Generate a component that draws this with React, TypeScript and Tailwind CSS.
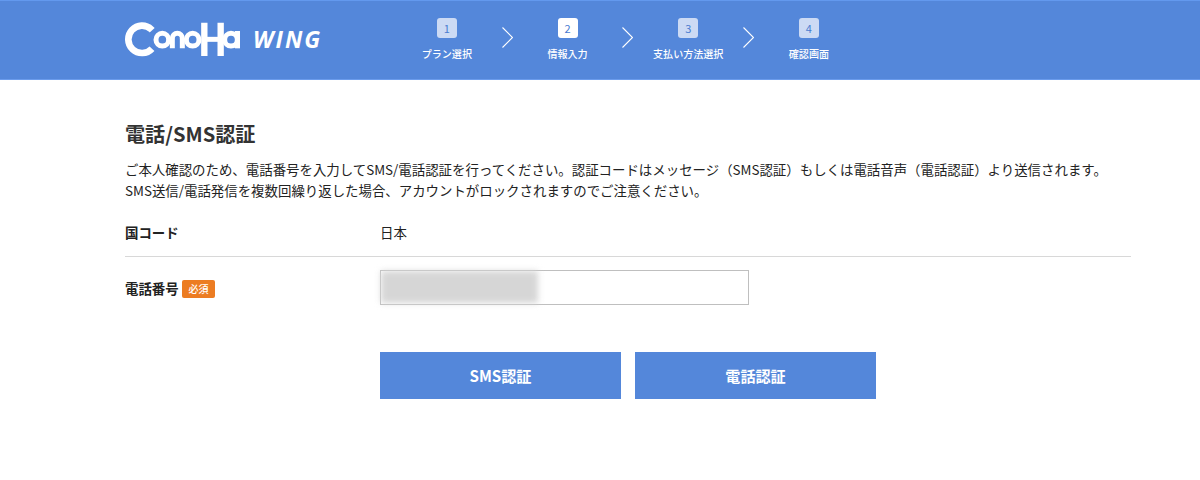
import { Fragment } from "react";
import clsx from "clsx";

const steps = ["プラン選択", "情報入力", "支払い方法選択", "確認画面"];
const currentStep = 2;

const Logo = () => (
  <div className="flex w-[267px] items-start">
    <svg
      role="img"
      aria-label="ConoHa"
      className="mt-[22px] h-[34.5px] w-[115.5px] shrink-0"
      viewBox="44 36 346.5 103.5"
      fill="none"
      stroke="#fff"
      strokeWidth="15"
    >
      <circle cx="95" cy="88" r="41" strokeWidth="20" pathLength="360" strokeDasharray="274 86" transform="rotate(43 95 88)" />
      <circle cx="156" cy="89" r="19" />
      <circle cx="201" cy="85" r="15" pathLength="360" strokeDasharray="180 180" transform="rotate(180 201 85)" />
      <path d="M186 84V115M216 84V115" />
      <circle cx="247" cy="89" r="19" />
      <path d="M282 38V138M331 38V138" strokeWidth="19" />
      <path d="M282 88H331" />
      <circle cx="362" cy="89" r="19" />
      <path d="M381.5 63V115" />
    </svg>
    <span className="mt-[23px] ml-[12.5px] font-['Open_Sans'] text-[23px] leading-8 font-bold tracking-[2px] text-white italic">
      WING
    </span>
  </div>
);

const StepArrow = () => (
  <svg className="mt-[27px] h-[21px] w-[11px] shrink-0" viewBox="0 0 11 21" fill="none" stroke="#fff" strokeWidth="1.1">
    <path d="M0.5 0.5L10.5 10.5L0.5 20.5" />
  </svg>
);

const Steps = () => (
  <ol className="flex">
    {steps.map((label, i) => (
      <Fragment key={label}>
        {i > 0 && <StepArrow />}
        <li className="flex w-[109.7px] flex-col items-center pt-[18px]">
          <span
            className={clsx(
              "flex size-5 items-center justify-center rounded-[3px] text-[11px] leading-5 text-[#4a7cd0]",
              i + 1 === currentStep ? "bg-white" : "bg-[#ccdaf4]"
            )}
          >
            {i + 1}
          </span>
          <span className="mt-2 text-[10.05px] leading-4 font-medium whitespace-nowrap text-white">{label}</span>
        </li>
      </Fragment>
    ))}
  </ol>
);

const App = () => {
  return (
    <div className="min-h-[480px] bg-white font-['Noto_Sans_CJK_JP',sans-serif] text-[13.43px] text-[#222]">
      <header className="flex h-20 border-t border-b border-t-[#6399ee] border-b-[#6b9cec] bg-[#5487da] pl-[125px]">
        <div className="-mt-px flex">
          <Logo />
          <Steps />
        </div>
      </header>

      <main className="ml-[125px] w-[1006px] pt-[39px]">
        <h1 className="text-[20.1px] leading-[30px] font-bold text-[#333]">電話/SMS認証</h1>
        <p className="mt-[10px] leading-[21px] whitespace-nowrap">
          ご本人確認のため、電話番号を入力してSMS/電話認証を行ってください。認証コードはメッセージ（SMS認証）もしくは電話音声（電話認証）より送信されます。
          <br />
          SMS送信/電話発信を複数回繰り返した場合、アカウントがロックされますのでご注意ください。
        </p>

        <dl>
          <div className="mt-[7px] flex h-[49px] items-center border-b border-[#d8d8d8]">
            <dt className="w-[255px] font-bold">国コード</dt>
            <dd>日本</dd>
          </div>
          <div className="flex h-[61px] items-center">
            <dt className="flex w-[254.5px] items-center pt-px font-bold">
              電話番号
              <span className="mt-px ml-[3px] flex h-[18px] w-[33.5px] items-center justify-center rounded-[2px] bg-[#ec7c22] text-[10.05px] font-medium text-white">
                必須
              </span>
            </dt>
            <dd className="h-[35px] w-[369.5px] border border-[#bfbfbf]">
              {/* masked phone number */}
              <div className="h-[32px] w-[157px] bg-[#d6d6d6] blur-[3px]" />
            </dd>
          </div>
        </dl>

        <div className="mt-[34px] ml-[255px] flex gap-[14px] text-[15.1px] font-bold text-white">
          <button className="h-[47px] w-[241px] bg-[#5487da]">SMS認証</button>
          <button className="h-[47px] w-[241px] bg-[#5487da]">電話認証</button>
        </div>
      </main>
    </div>
  );
};

export default App;
